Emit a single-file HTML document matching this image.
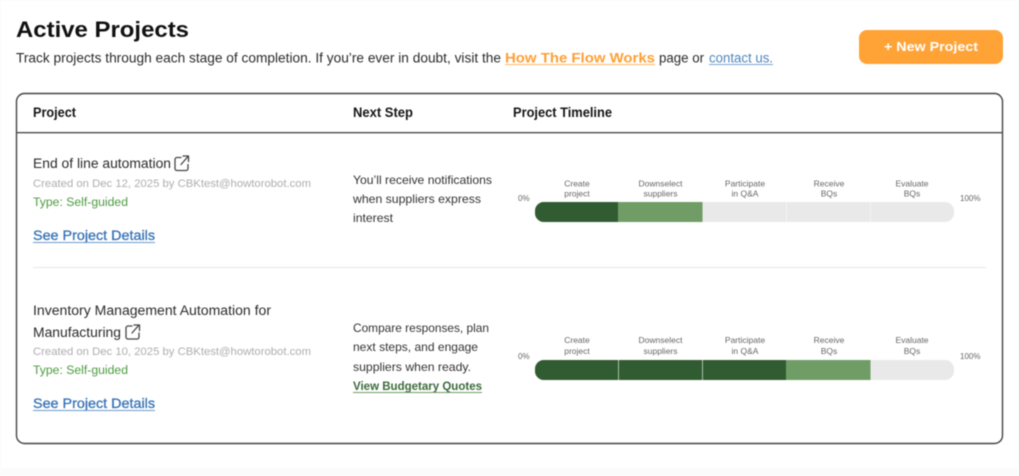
<!DOCTYPE html>
<html><head><meta charset="utf-8"><style>
html,body{margin:0;padding:0;width:1019px;height:476px;overflow:hidden;background:#fff}
svg{display:block;filter:blur(.45px)}
text{font-family:"Liberation Sans",sans-serif;fill:#2b2b2b}
.t{font-size:12.5px}.b{font-weight:700}
.m{font-size:11px;fill:#aeaeae}.g{font-size:11.5px;fill:#4c9a3f}
.l{font-size:14px;fill:#3571b4;stroke:#3571b4;stroke-width:.3px}
.n{font-size:12px;fill:#333}
.s{font-size:8.5px;fill:#666;text-anchor:middle}
.p{font-size:8px;fill:#666}
</style></head><body>
<svg width="1019" height="476" viewBox="0 0 1019 476" xmlns="http://www.w3.org/2000/svg">
<rect width="1019" height="476" fill="#fbfbfb"/>
<rect x="1" y="1" width="1017" height="467" fill="#fff"/>
<text x="16" y="37" font-size="22" font-weight="700" style="fill:#111" textLength="173" lengthAdjust="spacingAndGlyphs">Active Projects</text>
<text x="16" y="62.500" class="t" style="font-size:13.5px" textLength="485" lengthAdjust="spacingAndGlyphs">Track projects through each stage of completion. If you’re ever in doubt, visit the</text>
<text x="505" y="62.500" font-size="13.500" font-weight="700" style="fill:#ff9f33" textLength="150" lengthAdjust="spacingAndGlyphs">How The Flow Works</text>
<rect x="505" y="64" width="150" height="1" fill="#ffb76a"/>
<text x="659" y="62.500" class="t" style="font-size:13.5px" textLength="45" lengthAdjust="spacingAndGlyphs">page or</text>
<text x="709" y="62.500" style="font-size:13.5px;fill:#4f86bd" textLength="64" lengthAdjust="spacingAndGlyphs">contact us.</text>
<rect x="709" y="64" width="64" height="1" fill="#7aa4cf"/>
<rect x="859" y="30" width="144" height="34" rx="8" fill="#ffa337"/>
<text x="884" y="51" font-size="12.500" font-weight="700" style="fill:#fff" textLength="94" lengthAdjust="spacingAndGlyphs">+ New Project</text>

<rect x="16.500" y="93.500" width="986" height="350" rx="8" fill="#fff" stroke="#444" stroke-width="1.400"/>
<rect x="17" y="132" width="985" height="1.300" fill="#444"/>
<text x="33" y="117" class="b" font-size="13.500" style="fill:#151515" textLength="43" lengthAdjust="spacingAndGlyphs">Project</text>
<text x="353" y="117" class="b" font-size="13.500" style="fill:#151515" textLength="60" lengthAdjust="spacingAndGlyphs">Next Step</text>
<text x="513" y="117" class="b" font-size="13.500" style="fill:#151515" textLength="99" lengthAdjust="spacingAndGlyphs">Project Timeline</text>

<!-- Row 1 -->
<text x="33" y="168" font-size="13.500" textLength="138" lengthAdjust="spacingAndGlyphs">End of line automation</text>
<g fill="none" stroke="#444" stroke-width="1.300" stroke-linecap="round" stroke-linejoin="round">
<path d="M181 157.500h-4a2 2 0 0 0-2 2v9a2 2 0 0 0 2 2h9a2 2 0 0 0 2-2v-4"/>
<path d="M181 164.500l7-8M183 156h5.500v5.500"/>
</g>
<text x="33" y="187" class="m" textLength="278" lengthAdjust="spacingAndGlyphs">Created on Dec 12, 2025 by CBKtest@howtorobot.com</text>
<text x="33" y="206" class="g" textLength="95" lengthAdjust="spacingAndGlyphs">Type: Self-guided</text>
<text x="33" y="240" class="l" textLength="122" lengthAdjust="spacingAndGlyphs">See Project Details</text>
<rect x="33" y="242" width="122" height="1" fill="#6f9bcb"/>
<text x="353" y="184" class="n" textLength="139" lengthAdjust="spacingAndGlyphs">You’ll receive notifications</text>
<text x="353" y="203" class="n" textLength="128" lengthAdjust="spacingAndGlyphs">when suppliers express</text>
<text x="353" y="222" class="n" textLength="40" lengthAdjust="spacingAndGlyphs">interest</text>

<text x="577" y="186.500" class="s">Create</text><text x="577" y="196.500" class="s">project</text>
<text x="660.500" y="186.500" class="s">Downselect</text><text x="660.500" y="196.500" class="s">suppliers</text>
<text x="745" y="186.500" class="s">Participate</text><text x="745" y="196.500" class="s">in Q&amp;A</text>
<text x="829" y="186.500" class="s">Receive</text><text x="829" y="196.500" class="s">BQs</text>
<text x="912" y="186.500" class="s">Evaluate</text><text x="912" y="196.500" class="s">BQs</text>
<text x="518" y="201" class="p">0%</text>
<text x="960" y="201" class="p">100%</text>
<rect x="535" y="202" width="419" height="20" rx="9" fill="#e9e9e9"/>
<path d="M702.500 202H544a9 9 0 0 0-9 9v2a9 9 0 0 0 9 9h158.500z" fill="#6f9d65"/>
<path d="M618 202H544a9 9 0 0 0-9 9v2a9 9 0 0 0 9 9h74z" fill="#315c32"/>
<rect x="786" y="202" width="1" height="20" fill="#f3f3f3"/>
<rect x="870" y="202" width="1" height="20" fill="#f3f3f3"/>

<rect x="33" y="267" width="953" height="1" fill="#e6e6e6"/>

<!-- Row 2 -->
<text x="33" y="315" font-size="13.500" textLength="238" lengthAdjust="spacingAndGlyphs">Inventory Management Automation for</text>
<text x="33" y="337" font-size="13.500" textLength="88" lengthAdjust="spacingAndGlyphs">Manufacturing</text>
<g fill="none" stroke="#444" stroke-width="1.300" stroke-linecap="round" stroke-linejoin="round">
<path d="M132 326h-4a2 2 0 0 0-2 2v9a2 2 0 0 0 2 2h9a2 2 0 0 0 2-2v-4"/>
<path d="M132 333l7-8M134 325h5.500v5.500"/>
</g>
<text x="33" y="355" class="m" textLength="278" lengthAdjust="spacingAndGlyphs">Created on Dec 10, 2025 by CBKtest@howtorobot.com</text>
<text x="33" y="374" class="g" textLength="95" lengthAdjust="spacingAndGlyphs">Type: Self-guided</text>
<text x="33" y="408" class="l" textLength="122" lengthAdjust="spacingAndGlyphs">See Project Details</text>
<rect x="33" y="410" width="122" height="1" fill="#6f9bcb"/>
<text x="353" y="332" class="n" textLength="136" lengthAdjust="spacingAndGlyphs">Compare responses, plan</text>
<text x="353" y="351" class="n" textLength="125" lengthAdjust="spacingAndGlyphs">next steps, and engage</text>
<text x="353" y="371" class="n" textLength="118" lengthAdjust="spacingAndGlyphs">suppliers when ready.</text>
<text x="353" y="390" font-size="12" font-weight="700" style="fill:#3c6a3c" textLength="129" lengthAdjust="spacingAndGlyphs">View Budgetary Quotes</text>
<rect x="353" y="392" width="129" height="1" fill="#6f9d65"/>

<text x="577" y="343" class="s">Create</text><text x="577" y="354" class="s">project</text>
<text x="660.500" y="343" class="s">Downselect</text><text x="660.500" y="354" class="s">suppliers</text>
<text x="745" y="343" class="s">Participate</text><text x="745" y="354" class="s">in Q&amp;A</text>
<text x="829" y="343" class="s">Receive</text><text x="829" y="354" class="s">BQs</text>
<text x="912" y="343" class="s">Evaluate</text><text x="912" y="354" class="s">BQs</text>
<text x="518" y="359" class="p">0%</text>
<text x="960" y="359" class="p">100%</text>
<rect x="535" y="360" width="419" height="20" rx="9" fill="#e9e9e9"/>
<path d="M870.500 360H544a9 9 0 0 0-9 9v2a9 9 0 0 0 9 9h326.500z" fill="#6f9d65"/>
<path d="M786 360H544a9 9 0 0 0-9 9v2a9 9 0 0 0 9 9h242z" fill="#315c32"/>
<rect x="618" y="360" width="1" height="20" fill="#a9bfa9"/>
<rect x="702" y="360" width="1" height="20" fill="#a9bfa9"/>
</svg>
</body></html>
